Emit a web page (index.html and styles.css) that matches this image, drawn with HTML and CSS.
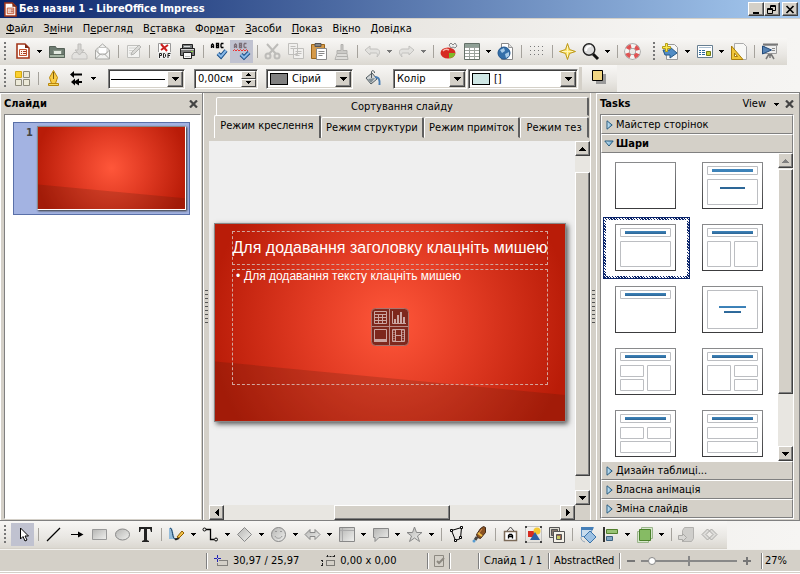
FILE: index.html
```html
<!DOCTYPE html>
<html lang="uk">
<head>
<meta charset="utf-8">
<title>Без назви 1 - LibreOffice Impress</title>
<link rel="stylesheet" href="styles.css">
</head>
<body>
<svg class="defs" aria-hidden="true">
  <defs>
    <linearGradient id="grey" x1="0" y1="0" x2="1" y2="1"><stop offset="0" stop-color="#b5b5b3"/><stop offset="1" stop-color="#f0f0ee"/></linearGradient>
    <linearGradient id="blue" x1="0" y1="0" x2="1" y2="0"><stop offset="0" stop-color="#d2ecfa"/><stop offset="1" stop-color="#69a5cd"/></linearGradient>
    <linearGradient id="bar" x1="0" y1="0" x2="0" y2="1"><stop offset="0" stop-color="#3f86bd"/><stop offset="1" stop-color="#2c6595"/></linearGradient>
    <linearGradient id="frame" x1="0" y1="0" x2="0" y2="1"><stop offset="0" stop-color="#898a8c"/><stop offset="1" stop-color="#3c3c3e"/></linearGradient>
    <symbol id="drop" viewBox="0 0 5 3"><path d="M0 0h5v1H0zM1 1h3v1H1zM2 2h1v1H2z"/></symbol>
    <symbol id="arrow-up" viewBox="0 0 7 4"><path d="M3 0h1v1h1v1h1v1h1v1H0V3h1V2h1V1h1z"/></symbol>
    <symbol id="arrow-down" viewBox="0 0 7 4"><path d="M0 0h7v1H6v1H5v1H4v1H3V3H2V2H1V1H0z"/></symbol>
    <symbol id="arrow-left" viewBox="0 0 4 7"><path d="M4 0v7H3V6H2V5H1V4H0V3h1V2h1V1h1V0z"/></symbol>
    <symbol id="arrow-right" viewBox="0 0 4 7"><path d="M0 0h1v1h1v1h1v1h1v1H3v1H2v1H1v1H0z"/></symbol>
    <symbol id="cross" viewBox="0 0 9 8"><path d="M1 0.5L8 7.5M8 0.5L1 7.5" stroke="#444" stroke-width="2.2"/></symbol>
    <symbol id="doc" viewBox="0 0 14 16"><path d="M1 1h8l4 4v10H1z" fill="#fff" stroke="#a3361a" stroke-width="1.6"/><path d="M9 1v4h4z" fill="#7a2913"/><path d="M3.500 6.500h7v6h-7z" fill="#fff1e8" stroke="#c4532d"/><path d="M5 8.500h1M7 8.500h3M5 10.500h1M7 10.500h3" stroke="#a3361a"/></symbol>
    <symbol id="tri-right" viewBox="0 0 7 10"><path d="M1 .8L6.200 5 1 9.200z" fill="url(#blue)" stroke="#285d80"/></symbol>
    <symbol id="tri-down" viewBox="0 0 10 7"><path d="M.8 1h8.400L5 6z" fill="url(#blue)" stroke="#285d80"/></symbol>
  </defs>
</svg>

<header class="titlebar">
  <svg class="app-icon" width="13" height="15"><use href="#doc"/></svg>
  <h1>Без назви 1 - LibreOffice Impress</h1>
  <div class="window-buttons">
    <button aria-label="Згорнути"><svg width="10" height="9"><path d="M2 7h6v2H2z"/></svg></button>
    <button aria-label="Відновити"><svg width="10" height="9" fill="none" stroke="#000"><path d="M3.500 3V.5h5v5H6M3 1.500h6M.5 3.500h5v5h-5zM0 4.500h6"/></svg></button>
    <button class="close" aria-label="Закрити"><svg width="10" height="9"><path d="M1.500 1l7 7M8.500 1l-7 7" stroke="#000" stroke-width="1.700"/></svg></button>
  </div>
</header>

<nav class="menubar">
  <a href="#"><u>Ф</u>айл</a><a href="#">З<u>м</u>іни</a><a href="#">П<u>е</u>регляд</a><a href="#">В<u>с</u>тавка</a><a href="#">Фор<u>м</u>ат</a><a href="#"><u>З</u>асоби</a><a href="#"><u>П</u>оказ</a><a href="#">Ві<u>к</u>но</a><a href="#"><u>Д</u>овідка</a>
</nav>

<div class="toolrow">
<div class="toolbar" role="toolbar" aria-label="Стандартна">
  <i class="grip"></i>
  <button class="tool" aria-label="Створити"><svg viewBox="0 0 19 19"><use href="#doc" x="3" y="1" width="14" height="16"/></svg></button>
  <button class="more" aria-label="Інші"><svg><use href="#drop"/></svg></button>
  <button class="tool" aria-label="Відкрити"><svg viewBox="0 0 19 19"><path d="M2.500 4.500h6l1 2h8v9h-15z" fill="#6d7b70" stroke="#566158"/><path d="M6.500 8.500h8v7h-8z" fill="#e4ebe2" stroke="#849184"/><path d="M2.500 12.500h15v3h-15z" fill="#a3b3a2" stroke="#5a675b"/></svg></button>
  <button class="tool" aria-label="Зберегти"><svg viewBox="0 0 19 19"><path d="M4 10.500h11l2 3v3.500H2v-3.500z" fill="#e3e2df" stroke="#c2c1be"/><path d="M8 2h3v6h3l-4.500 5L5 8h3z" fill="#d6d5d2" stroke="#bebdba"/></svg></button>
  <button class="tool" aria-label="Надіслати"><svg viewBox="0 0 19 19"><path d="M2.500 8l7-6 7 6v9h-14z" fill="#f2f2f0" stroke="#a8a8a5"/><path d="M5 5.500h9V11l-4.500 2L5 11z" fill="#fff" stroke="#c5c5c2"/><path d="M2.500 17l5-5h4l5 5M2.500 8l5 5M16.500 8l-5 5" fill="none" stroke="#a8a8a5"/></svg></button>
  <i class="sep"></i>
  <button class="tool" aria-label="Редагувати"><svg viewBox="0 0 19 19"><path d="M3.500 3.500h12v12h-12z" fill="#f3f3f1" stroke="#c0c0bd"/><path d="M5 6h8M5 8.500h6M5 11h4" stroke="#d2d2cf"/><path d="M7 13l1-3 7-7 2 2-7 7z" fill="#dadad7" stroke="#b5b5b2"/></svg></button>
  <i class="sep"></i>
  <button class="tool" aria-label="Експорт PDF"><svg viewBox="0 0 19 19"><path d="M3.500 1.500h12v15h-12z" fill="#fff" stroke="#999"/><path d="M6 2l6 7M13 3l-7 5" stroke="#cb2020" stroke-width="2"/><path d="M3 10h13v7H3z" fill="#eee"/><path d="M4.500 16v-4.500h2v2h-2M8.500 15.500v-4h1l1 1v2l-1 1zM13 16v-4.500h2.500M13 13.500h2" fill="none" stroke="#222"/></svg></button>
  <button class="tool" aria-label="Друк"><svg viewBox="0 0 19 19"><path d="M2.500 6.500h14v7h-14z" fill="#777" stroke="#222"/><path d="M4.500 2.500h10v4h-10z" fill="#777c7c" stroke="#222"/><path d="M6 4.500h6" stroke="#ddd"/><path d="M3 7.500h13" stroke="#d5d5d5"/><path d="M13 9.500h2" stroke="#8de03d"/><path d="M5.500 10.500h8v6h-8z" fill="#f7f7f7" stroke="#222"/><path d="M7 14.500h5" stroke="#bbb"/></svg></button>
  <i class="sep"></i>
  <button class="tool" aria-label="Перевірка правопису"><svg viewBox="0 0 19 19"><path d="M2.500 6V3l1-1 1 1v3M3 4.500h2M7.500 1v4.500h2V3.500h-2V1.500h2v2M14.500 1.500h-2l-.5 1v2l.5 1h2" fill="none" stroke="#000" stroke-width="1.300"/><path d="M9 11.500l3 3 5-6" fill="none" stroke="#174d86" stroke-width="4"/><path d="M9 11.500l3 3 5-6" fill="none" stroke="#88b8e8" stroke-width="2"/></svg></button>
  <button class="tool on" aria-label="Автоперевірка правопису"><svg viewBox="0 0 19 19"><path d="M2.500 6V3l1-1 1 1v3M3 4.500h2M7.500 1v4.500h2V3.500h-2V1.500h2v2M14.500 1.500h-2l-.5 1v2l.5 1h2" fill="none" stroke="#7a6d76" stroke-width="1.300"/><path d="M1 9l1.500-1.500L4 9l1.500-1.500L7 9l1.500-1.500L10 9l1.500-1.500L13 9l1.500-1.500L16 9" fill="none" stroke="#e33"/><path d="M9 12.500l3 3 5-5" fill="none" stroke="#174d86" stroke-width="4"/><path d="M9 12.500l3 3 5-5" fill="none" stroke="#88b8e8" stroke-width="2"/></svg></button>
  <i class="sep"></i>
  <button class="tool" aria-label="Вирізати"><svg viewBox="0 0 19 19" fill="none" stroke="#bdbcb9" stroke-width="2"><path d="M4 2l9 10M15 2L6 12"/><circle cx="5" cy="14" r="2.500"/><circle cx="14" cy="14" r="2.500"/></svg></button>
  <button class="tool" aria-label="Копіювати"><svg viewBox="0 0 19 19" fill="#f1f0ee" stroke="#c0bfbc"><path d="M2.500 1.500h9v11h-9zM7.500 6.500h10v10h-10z"/><path d="M4.500 4.500h5M4.500 6.500h3M9.500 9.500h6M9.500 11.500h6M9.500 13.500h4"/></svg></button>
  <button class="tool" aria-label="Вставити"><svg viewBox="0 0 19 19"><path d="M2.500 2.500h13v14h-13z" fill="#d59a4a" stroke="#9b6519"/><path d="M6 1.500h6v3H6z" fill="#888" stroke="#555"/><path d="M7.500 6.500h10v11h-10z" fill="#fff" stroke="#888"/><path d="M9.500 9.500h6M9.500 11.500h6M9.500 13.500h4" stroke="#888"/></svg></button>
  <button class="tool" aria-label="Пензель формату"><svg viewBox="0 0 19 19" fill="#cbcac7" stroke="#b2b1ae"><path d="M9 2.500h2v6h4v3H5v-3h4z"/><path d="M5 11.500h10l1 6H3z" fill="#dddcd9"/><path d="M5 14.500h10"/></svg></button>
  <i class="sep"></i>
  <button class="tool" aria-label="Скасувати"><svg viewBox="0 0 19 19"><path d="M2 8l5-4v3h6c4 0 5 4 1 8 1-4 0-4-2-4H7v2z" fill="#e2e1de" stroke="#c2c1be"/></svg></button>
  <button class="more dim" aria-label="Інші"><svg><use href="#drop"/></svg></button>
  <button class="tool" aria-label="Повернути"><svg viewBox="0 0 19 19"><path d="M17 8l-5-4v3H6c-4 0-5 4-1 8-1-4 0-4 2-4h5v2z" fill="#e2e1de" stroke="#c2c1be"/></svg></button>
  <button class="more dim" aria-label="Інші"><svg><use href="#drop"/></svg></button>
  <i class="sep"></i>
  <button class="tool" aria-label="Діаграма"><svg viewBox="0 0 19 19"><ellipse cx="9" cy="11" rx="7.500" ry="5.500" fill="#d62b22"/><path d="M10 11h6c0 4-3 5-6 5z" fill="#7db928"/><path d="M4 9c2-2 4-2 6-1" stroke="#f9b5ac" stroke-width="1.500" fill="none"/><path d="M10 3l2-2 2 2 2-2 2 3-2 2-2-1-2 1z" fill="#eee" stroke="#888"/></svg></button>
  <button class="tool" aria-label="Таблиця"><svg viewBox="0 0 19 19"><path d="M2.500 1.500h15v16h-15z" fill="#fff" stroke="#647068"/><path d="M3 2h14v3H3z" fill="#8fa096"/><path d="M3 5.500h14M3 8.500h14M3 11.500h14M3 14.500h14M7.500 5v12M12.500 5v12" stroke="#9ba39d"/></svg></button>
  <button class="more" aria-label="Інші"><svg><use href="#drop"/></svg></button>
  <button class="tool" aria-label="Гіперпосилання"><svg viewBox="0 0 19 19"><path d="M5.500 1.500h7l4 4v12h-11z" fill="#fff" stroke="#888"/><path d="M12.500 1.500v4h4" fill="#ddd" stroke="#999"/><circle cx="8" cy="11" r="6" fill="#346fa9" stroke="#20558d"/><path d="M4 8l4-2 1 3-3 2zM9 12l4-2v4l-3 2z" fill="#a8cbe8"/></svg></button>
  <i class="sep"></i>
  <button class="tool" aria-label="Сітка"><svg viewBox="0 0 19 19" stroke="#777" stroke-dasharray="1 3"><path d="M3 4.500h14M3 8.500h14M3 12.500h14"/></svg></button>
  <i class="sep"></i>
  <button class="tool" aria-label="Навігатор"><svg viewBox="0 0 19 19"><path d="M9.500 1.500l2 6 6 2-6 2-2 6-2-6-6-2 6-2z" fill="#fbe36a" stroke="#bd981a"/><path d="M9.500 4v11M4 9.500h11" stroke="#fff5b8"/></svg></button>
  <button class="tool" aria-label="Масштаб"><svg viewBox="0 0 19 19"><path d="M12 12l5 5" stroke="#111" stroke-width="3"/><circle cx="8" cy="7.500" r="5.800" fill="#ddd" stroke="#222" stroke-width="1.400"/><path d="M5 9c0-4 2-5 5-5" fill="none" stroke="#fff" stroke-width="2"/></svg></button>
  <button class="more" aria-label="Інші"><svg><use href="#drop"/></svg></button>
  <i class="sep"></i>
  <button class="tool" aria-label="Довідка"><svg viewBox="0 0 19 19" fill="none"><circle cx="9.500" cy="9.500" r="5.500" stroke="#999" stroke-width="5.500"/><circle cx="9.500" cy="9.500" r="5.500" stroke="#f5f5f3" stroke-width="4"/><circle cx="9.500" cy="9.500" r="5.500" stroke="#e05353" stroke-width="4" stroke-dasharray="4.320 4.320" stroke-dashoffset="-2.160"/></svg></button>
  <i class="grip second"></i>
  <button class="tool" aria-label="Слайд"><svg viewBox="0 0 19 19"><path d="M5.500 2.500h8l3 3v12h-11z" fill="#f7f7f7" stroke="#999"/><path d="M2 8h7V5l7 6-7 5v-3H4z" fill="#518cc5" stroke="#255987"/><path d="M4.500 1.500h2v3h3v2h-3v3h-2v-3h-3v-2h3z" fill="#fce94f" stroke="#b79f16"/></svg></button>
  <button class="more" aria-label="Інші"><svg><use href="#drop"/></svg></button>
  <button class="tool" aria-label="Макет слайда"><svg viewBox="0 0 19 19"><path d="M2.500 3.500h15v12h-15z" fill="#fff" stroke="#667e91"/><path d="M4 5.500h12" stroke="#a9bed0"/><path d="M4 8.500h2M7 8.500h3M4 10.500h2M7 10.500h3M4 12.500h2M7 12.500h3" stroke="#2d6a9b"/><path d="M11.500 9.500h4v4h-4z" fill="#c6cf35" stroke="#737b13"/></svg></button>
  <button class="more" aria-label="Інші"><svg><use href="#drop"/></svg></button>
  <button class="tool" aria-label="Дизайн слайда"><svg viewBox="0 0 19 19"><path d="M5.500 1.500h9l3 3v13h-12z" fill="#f8f8f6" stroke="#aaa"/><path d="M2.500 4v13.500H14z" fill="#f0c638" stroke="#a77e0d"/><path d="M5.500 11v3.500h3z" fill="#fff" stroke="#a77e0d"/></svg></button>
  <i class="sep"></i>
  <button class="tool" aria-label="Показ слайдів"><svg viewBox="0 0 19 19"><path d="M3 2.500h15" stroke="#777" stroke-width="2"/><path d="M4.500 3.500h12v8h-12z" fill="#eee" stroke="#999"/><path d="M9 12l-3 5M11 12l3 5M10 12v4" stroke="#777" stroke-width="1.500"/><path d="M2.500 4v8l9-4z" fill="#5682b2" stroke="#224b7b"/><path d="M12 6.500h3M12 8.500h3" stroke="#888"/></svg></button>
  <i class="pad"></i>
</div>
</div>

<div class="toolrow">
<div class="toolbar" role="toolbar" aria-label="Лінія та заливка">
  <i class="grip"></i>
  <button class="tool" aria-label="Стилі"><svg viewBox="0 0 19 19"><path d="M2.500 2.500h6v6h-6z" fill="#fbd030" stroke="#d5a90f"/><path d="M10.500 2.500h6v6h-6zM2.500 10.500h6v6h-6zM10.500 10.500h6v6h-6z" fill="#ece9d8" stroke="#8e8b7c"/></svg></button>
  <i class="sep"></i>
  <button class="tool" aria-label="Лінія"><svg viewBox="0 0 19 19"><path d="M9.500 1.500l4 7-2 6h-4l-2-6z" fill="#f9cc45" stroke="#ba870a"/><path d="M9.500 3v7" stroke="#7a5c10"/><path d="M4.500 14.500h10v2h-10z" fill="#f4d65e" stroke="#ba870a"/></svg></button>
  <button class="tool" aria-label="Стиль стрілок"><svg viewBox="0 0 19 19"><path d="M3 5.500L7 2v2.500h8v2H7V9zM4 13l4-3.500V12l4-2.500V12h3v2h-3v2.500L8 14v2.500z"/></svg></button>
  <button class="more" aria-label="Інші"><svg><use href="#drop"/></svg></button>
  <label class="combo w-line"><i class="line-swatch"></i><select aria-label="Стиль лінії"><option></option></select><span class="knob"><svg width="7" height="4"><use href="#arrow-down"/></svg></span></label>
  <div class="combo w-size"><input type="text" value="0,00см" aria-label="Ширина лінії"><div class="spin"><button aria-label="Більше"><svg width="5" height="3"><path d="M2 0h1v1h1v1h1v1H0V2h1V1h1z"/></svg></button><button aria-label="Менше"><svg width="5" height="3"><use href="#drop"/></svg></button></div></div>
  <label class="combo w-color"><i class="swatch grey"></i><select aria-label="Колір лінії"><option>Сірий</option></select><span class="knob"><svg width="7" height="4"><use href="#arrow-down"/></svg></span></label>
  <button class="tool wide" aria-label="Область"><svg viewBox="0 0 19 19"><path d="M3 9l6-5 5 6-6 5z" fill="#d3d6d7" stroke="#4f5a60"/><path d="M5 10l7-1-4 5z" fill="#7f8d94"/><path d="M8.500 9V3c0-2 3-2 3 1" fill="none" stroke="#4f5a60"/><path d="M12 8c4 0 5 3 4.500 8" fill="none" stroke="#4a7eb3" stroke-width="2"/></svg></button>
  <label class="combo w-type"><select aria-label="Тип заливки"><option>Колір</option></select><span class="knob"><svg width="7" height="4"><use href="#arrow-down"/></svg></span></label>
  <label class="combo w-fill"><i class="swatch mint"></i><select aria-label="Заливка"><option>[]</option></select><span class="knob"><svg width="7" height="4"><use href="#arrow-down"/></svg></span></label>
  <i class="divider"></i>
  <button class="tool shadow" aria-label="Тінь"><svg viewBox="0 0 19 19"><path d="M6 5h10v10H6z" fill="#999"/><path d="M2.500 1.500h10v10h-10z" fill="#f1d684" stroke="#000"/></svg></button>
</div>
</div>

<main class="work">
  <aside class="panel slides">
    <div class="panel-head"><h2>Слайди</h2><button aria-label="Закрити"><svg width="9" height="8"><use href="#cross"/></svg></button></div>
    <div class="slide-list">
      <div class="slide-item"><span>1</span><div class="mini slide-art"></div></div>
    </div>
  </aside>
  <div class="splitter"><i class="split-grip"></i></div>

  <section class="editor">
    <div class="tabs">
      <button class="tab top">Сортування слайду</button>
      <div class="tab-row"><button class="tab active">Режим креслення</button><button class="tab">Режим структури</button><button class="tab">Режим приміток</button><button class="tab last">Режим тез</button></div>
    </div>
    <div class="canvas">
      <div class="slide slide-art">
        <div class="ph title-ph">Для додавання заголовку клацніть мишею</div>
        <div class="ph body-ph">
          <ul><li>Для додавання тексту клацніть мишею</li></ul>
          <svg class="insert" width="38" height="38" viewBox="0 0 38 38" fill="none" stroke="#b98b87"><rect x=".5" y=".5" width="37" height="37" rx="4" fill="#7e281d" stroke="#a6746d"/><path d="M18.500 1v36M1 18.500h36"/><path d="M3.500 3.500h12v12h-12zM4 6.500h12M4 9.500h12M4 12.500h12M7.500 7v9M11.500 7v9" stroke="#cba5a1"/><path d="M21.500 3v12.500H35" stroke="#cba5a1"/><path d="M24 15v-4M27 15V7M30 15V4M33 15V9" stroke="#cba5a1" stroke-width="2"/><path d="M3.500 21.500h12v12h-12zM4 32h12" stroke="#cba5a1"/><path d="M3 31h13v3H3z" fill="#cba5a1" stroke="none"/><path d="M21.500 21.500h12v12h-12zM24.500 22v12M30.500 22v12M25 27.500h6" stroke="#cba5a1"/><path d="M23 22v12M32 22v12" stroke="#cba5a1" stroke-dasharray="1 1"/></svg>
        </div>
      </div>
    </div>
    <div class="scroll vertical">
      <button aria-label="Вгору"><svg width="7" height="4"><use href="#arrow-up"/></svg></button><i class="thumb"></i><button aria-label="Вниз"><svg width="7" height="4"><use href="#arrow-down"/></svg></button>
    </div>
    <div class="scroll horizontal">
      <button aria-label="Ліворуч"><svg width="4" height="7"><use href="#arrow-left"/></svg></button><i class="thumb"></i><button aria-label="Праворуч"><svg width="4" height="7"><use href="#arrow-right"/></svg></button>
    </div>
  </section>
  <div class="splitter"><i class="split-grip"></i></div>

  <aside class="panel tasks">
    <div class="panel-head"><h2>Tasks</h2><button class="view">View<svg width="5" height="3"><use href="#drop"/></svg></button><button aria-label="Закрити"><svg width="9" height="8"><use href="#cross"/></svg></button></div>
    <div class="accordion">
      <button class="fold"><svg width="7" height="10"><use href="#tri-right"/></svg>Майстер сторінок</button>
      <button class="fold open"><svg width="10" height="7"><use href="#tri-down"/></svg>Шари</button>
      <div class="layouts">
        <div class="layout-grid">
          <button aria-label="Порожній слайд"><svg viewBox="0 0 61 47"><rect x=".5" y=".5" width="60" height="46" class="frame"/></svg></button>
          <button aria-label="Титульний слайд"><svg viewBox="0 0 61 47"><rect x=".5" y=".5" width="60" height="46" class="frame"/><path d="M5.500 4.500h50v8h-50zM5.500 17.500h50v25h-50z" class="box"/><path d="M10 7h41v3H10zM18 25h25v2H18z" class="fillbar"/></svg></button>
          <button class="selected" aria-label="Заголовок, вміст"><svg viewBox="0 0 61 47"><rect x=".5" y=".5" width="60" height="46" class="frame"/><path d="M5.500 4.500h50v8h-50zM5.500 17.500h50v25h-50z" class="box"/><path d="M10 7h41v3H10z" class="fillbar"/></svg></button>
          <button aria-label="Заголовок і 2 вмісти"><svg viewBox="0 0 61 47"><rect x=".5" y=".5" width="60" height="46" class="frame"/><path d="M5.500 4.500h50v8h-50zM5.500 17.500h23v25h-23zM32.500 17.500h23v25h-23z" class="box"/><path d="M10 7h41v3H10z" class="fillbar"/></svg></button>
          <button aria-label="Лише заголовок"><svg viewBox="0 0 61 47"><rect x=".5" y=".5" width="60" height="46" class="frame"/><path d="M5.500 4.500h50v8h-50z" class="box"/><path d="M10 7h41v3H10z" class="fillbar"/></svg></button>
          <button aria-label="Текст по центру"><svg viewBox="0 0 61 47"><rect x=".5" y=".5" width="60" height="46" class="frame"/><path d="M5.500 4.500h50v38h-50z" class="box"/><path d="M17 20h27v2H17zM22 25h17v2H22z" class="fillbar"/></svg></button>
          <button aria-label="Заголовок, 2 вмісти й вміст"><svg viewBox="0 0 61 47"><rect x=".5" y=".5" width="60" height="46" class="frame"/><path d="M5.500 4.500h50v8h-50zM5.500 17.500h23v11h-23zM5.500 31.500h23v11h-23zM32.500 17.500h23v25h-23z" class="box"/><path d="M10 7h41v3H10z" class="fillbar"/></svg></button>
          <button aria-label="Заголовок, вміст і 2 вмісти"><svg viewBox="0 0 61 47"><rect x=".5" y=".5" width="60" height="46" class="frame"/><path d="M5.500 4.500h50v8h-50zM5.500 17.500h23v25h-23zM32.500 17.500h23v11h-23zM32.500 31.500h23v11h-23z" class="box"/><path d="M10 7h41v3H10z" class="fillbar"/></svg></button>
          <button aria-label="Заголовок, 2 вмісти над вмістом"><svg viewBox="0 0 61 47"><rect x=".5" y=".5" width="60" height="46" class="frame"/><path d="M5.500 4.500h50v8h-50zM5.500 17.500h23v11h-23zM32.500 17.500h23v11h-23zM5.500 31.500h50v11h-50z" class="box"/><path d="M10 7h41v3H10z" class="fillbar"/></svg></button>
          <button aria-label="Заголовок, вміст над вмістом"><svg viewBox="0 0 61 47"><rect x=".5" y=".5" width="60" height="46" class="frame"/><path d="M5.500 4.500h50v8h-50zM5.500 17.500h50v11h-50zM5.500 31.500h50v11h-50z" class="box"/><path d="M10 7h41v3H10z" class="fillbar"/></svg></button>
        </div>
        <div class="scroll vertical">
          <button class="off" aria-label="Вгору"><svg width="7" height="4"><use href="#arrow-up"/></svg></button><i class="thumb"></i><button aria-label="Вниз"><svg width="7" height="4"><use href="#arrow-down"/></svg></button>
        </div>
      </div>
      <button class="fold"><svg width="7" height="10"><use href="#tri-right"/></svg>Дизайн таблиці...</button>
      <button class="fold"><svg width="7" height="10"><use href="#tri-right"/></svg>Власна анімація</button>
      <button class="fold"><svg width="7" height="10"><use href="#tri-right"/></svg>Зміна слайдів</button>
    </div>
  </aside>
</main>

<div class="toolrow drawing">
<div class="toolbar" role="toolbar" aria-label="Малювання">
  <i class="grip"></i>
  <button class="tool on" aria-label="Вибрати"><svg viewBox="0 0 19 19"><path d="M7.500 3v11l2.500-2.500 2 4.500 2-1-2-4h3.500z" fill="#fff" stroke="#000"/></svg></button>
  <i class="sep"></i>
  <button class="tool" aria-label="Лінія"><svg viewBox="0 0 19 19"><path d="M3 16L16 3" stroke="#000" stroke-width="1.200"/></svg></button>
  <button class="tool" aria-label="Стрілка"><svg viewBox="0 0 19 19"><path d="M4 9.500h9" stroke="#000"/><path d="M11 6.500l5.500 3-5.500 3z"/></svg></button>
  <button class="tool" aria-label="Прямокутник"><svg viewBox="0 0 19 19"><path d="M2.500 4.500h14v10h-14z" fill="url(#grey)" stroke="#999"/></svg></button>
  <button class="tool" aria-label="Еліпс"><svg viewBox="0 0 19 19"><ellipse cx="9.500" cy="9.500" rx="7" ry="5.500" fill="url(#grey)" stroke="#888"/></svg></button>
  <button class="tool" aria-label="Текст"><svg viewBox="0 0 19 19"><path d="M3 2h13v5h-1l-1-3h-3v11l2 1v1H6v-1l2-1V4H5L4 7H3z" fill="#222"/></svg></button>
  <i class="sep"></i>
  <button class="tool" aria-label="Крива"><svg viewBox="0 0 19 19"><path d="M2 3h3l3 11H2z" fill="#93bbda"/><path d="M3 3c3 0 2 11 5 11" fill="none" stroke="#173b5b"/><path d="M8 14c4 1 4-2 5-4" stroke="#222" fill="none" stroke-width="2"/><path d="M10 12l5-6 2 2-5 5z" fill="#f4c34a" stroke="#8e5c00"/></svg></button>
  <button class="more" aria-label="Інші"><svg><use href="#drop"/></svg></button>
  <button class="tool" aria-label="З'єднувач"><svg viewBox="0 0 19 19" fill="none" stroke="#000"><path d="M5 4.500h4.500v10H13" stroke-width="1.300"/><circle cx="3.500" cy="4.500" r="1.500"/><circle cx="15" cy="14.500" r="1.500"/></svg></button>
  <button class="more" aria-label="Інші"><svg><use href="#drop"/></svg></button>
  <button class="tool" aria-label="Основні фігури"><svg viewBox="0 0 19 19"><path d="M9.500 2.500l7 7-7 7-7-7z" fill="url(#grey)" stroke="#888"/></svg></button>
  <button class="more" aria-label="Інші"><svg><use href="#drop"/></svg></button>
  <button class="tool" aria-label="Символи"><svg viewBox="0 0 19 19"><circle cx="9.500" cy="9.500" r="7" fill="url(#grey)" stroke="#888"/><path d="M6 6.500h2M11 6.500h2M6 11c1 3 6 3 7 0" fill="none" stroke="#999"/></svg></button>
  <button class="more" aria-label="Інші"><svg><use href="#drop"/></svg></button>
  <button class="tool" aria-label="Блокові стрілки"><svg viewBox="0 0 19 19"><path d="M2 9.500l5-5v3h5v-3l5 5-5 5v-3H7v3z" fill="url(#grey)" stroke="#888"/></svg></button>
  <button class="more" aria-label="Інші"><svg><use href="#drop"/></svg></button>
  <button class="tool" aria-label="Блок-схеми"><svg viewBox="0 0 19 19"><path d="M2.500 2.500h15v14h-15z" fill="url(#grey)" stroke="#888"/><path d="M3 5.500h14M5.500 3v13" stroke="#aaa"/></svg></button>
  <button class="more" aria-label="Інші"><svg><use href="#drop"/></svg></button>
  <button class="tool" aria-label="Виноски"><svg viewBox="0 0 19 19"><path d="M2.500 3.500h15v9H8l-4 4v-4H2.500z" fill="url(#grey)" stroke="#888"/></svg></button>
  <button class="more" aria-label="Інші"><svg><use href="#drop"/></svg></button>
  <button class="tool" aria-label="Зірки"><svg viewBox="0 0 19 19"><path d="M9.500 2l2 5.500H17l-4.500 3.500 2 5.500-5-3.500-5 3.500 2-5.500L2 7.500h5.500z" fill="url(#grey)" stroke="#888"/></svg></button>
  <button class="more" aria-label="Інші"><svg><use href="#drop"/></svg></button>
  <i class="sep"></i>
  <button class="tool" aria-label="Вузли"><svg viewBox="0 0 19 19" fill="#fff" stroke="#000"><path d="M4.500 5.500l10-3-1 11-5 2z" fill="none"/><path d="M3.500 4.500h2v2h-2zM13.500 1.500h2v2h-2zM12.500 11.500h2v2h-2zM7.500 14.500h2v2h-2z"/></svg></button>
  <button class="tool" aria-label="Точки приклеювання"><svg viewBox="0 0 19 19"><path d="M13.500 1.500l2 1v5l-5 6-3-1-1-3 4-6z" fill="#8a5222" stroke="#402817"/><path d="M8 8l4 3" stroke="#edbd45" stroke-width="2"/><path d="M12 4l-3 4" stroke="#d89355"/><path d="M7 12l-2 3" stroke="#444" stroke-width="3"/><circle cx="4" cy="16" r="1.500" fill="#569bd0"/></svg></button>
  <i class="sep"></i>
  <button class="tool" aria-label="Галерея Fontwork"><svg viewBox="0 0 19 19"><path d="M6 6l3.500-4L13 6" fill="none" stroke="#444"/><path d="M3.500 6.500h12v9h-12z" fill="#fff" stroke="#7b6a58" stroke-width="1.500"/><path d="M7.500 13.500v-3l1-1h2l1 1v3M8 11.500h3" fill="none" stroke="#000" stroke-width="1.300"/></svg></button>
  <button class="tool" aria-label="З файла"><svg viewBox="0 0 19 19"><path d="M1.500 1.500h16v16h-16z" fill="none" stroke="#999" stroke-dasharray="1 1"/><path d="M1 1h2v2H1zM16 1h2v2h-2zM1 16h2v2H1zM16 16h2v2h-2z" fill="#444"/><path d="M4 6h6v6H4z" fill="#d52b20"/><circle cx="13" cy="6" r="3.500" fill="#f5c931"/><path d="M11 7l5 8H6z" fill="#2d61a5"/></svg></button>
  <button class="tool" aria-label="Галерея"><svg viewBox="0 0 19 19" stroke="#555"><path d="M2.500 2.500h10v10h-10z" fill="#dedbd2"/><path d="M4.500 4.500h6v6h-6z" fill="#85776b"/><path d="M6.500 6.500h11v11h-11z" fill="#f4f1e8"/><path d="M9.500 9.500h5v5h-5z" fill="#9a654b"/><path d="M10 11h3v3h-3z" fill="#c6ca62" stroke="none"/></svg></button>
  <i class="sep"></i>
  <button class="tool" aria-label="Обертати"><svg viewBox="0 0 19 19"><path d="M3.500 2.500h12l-5 9h-7z" fill="#c8dced" stroke="#5d8fc1"/><path d="M3 2h12v3H3z" fill="#457fb8"/><path d="M12 6l6 6-6 6-6-6z" fill="#9dc1e3" stroke="#3973aa"/><path d="M3 12c0 3 1 4 4 5" fill="none" stroke="#9aaabb"/></svg></button>
  <button class="tool" aria-label="Вирівнювання"><svg viewBox="0 0 19 19"><path d="M3 2v15" stroke="#333" stroke-width="2"/><path d="M5.500 4.500h11v4h-11z" fill="#98c375" stroke="#527f2e"/><path d="M5.500 11.500h6v4h-6z" fill="#83a7c5" stroke="#3d6484"/></svg></button>
  <button class="more" aria-label="Інші"><svg><use href="#drop"/></svg></button>
  <button class="tool" aria-label="Розташувати"><svg viewBox="0 0 19 19"><path d="M2.500 6.500h11v11h-11z" fill="#d7e7cc" stroke="#9bb58c"/><path d="M6.500 2.500h11v11h-11z" fill="#d7e7cc" stroke="#9bb58c"/><path d="M4.500 4.500h11v11h-11z" fill="#86bb64" stroke="#4a812b"/></svg></button>
  <button class="more" aria-label="Інші"><svg><use href="#drop"/></svg></button>
  <i class="sep"></i>
  <button class="tool" aria-label="Видавлювання"><svg viewBox="0 0 19 19"><path d="M5.500 5.500l2-3h9v11l-2 3h-9z" fill="#cfcecb" stroke="#b2b1ae"/><path d="M1.500 10.500h4v-2l4 4-4 4v-2h-4z" fill="#d8d7d4" stroke="#aaa9a6"/></svg></button>
  <button class="tool" aria-label="Взаємодія"><svg viewBox="0 0 19 19"><path d="M7.500 4L2 9.500 7.500 15l2-2-3.500-3.500L9.500 6zM11.500 4L17 9.500 11.500 15l-2-2 3.500-3.500L9.500 6z" fill="#dddcd9" stroke="#aaa9a6"/></svg></button>
  <i class="pad"></i>
</div>
</div>

<footer class="status">
  <div class="cell blank"></div>
  <div class="cell position"><svg width="15" height="12"><path d="M3.500 0v8M0 3.500h8" stroke="#2222b8" stroke-dasharray="3 1"/><path d="M5.500 5.500h8v5h-10v-3" fill="none" stroke="#333" stroke-dasharray="1 1"/></svg><span>30,97 / 25,97</span><svg class="size-icon" width="15" height="12" fill="none" stroke="#222"><path d="M1.500 5v6M0 5.500h3M0 10.500h3M5.500 1.500h9M6.500 0v3M13.500 0v3" stroke-dasharray="2 1"/><path d="M5.500 5.500h8v5h-8z" stroke-dasharray="1 1"/></svg><span>0,00 x 0,00</span></div>
  <div class="cell sign"><svg width="12" height="12" fill="none" stroke="#8d8981"><path d="M1.500.5h9v11h-9z"/><path d="M4 6l2 2 5-5" stroke-width="2"/></svg></div>
  <div class="cell gap"></div>
  <div class="cell page">Слайд 1 / 1</div>
  <div class="cell theme">AbstractRed</div>
  <div class="cell zoom"><button aria-label="Зменшити"><svg width="8" height="8"><path d="M0 3h8v2H0z"/></svg></button><input type="range" min="0" max="100" value="8" aria-label="Масштаб"><button aria-label="Збільшити"><svg width="8" height="8"><path d="M0 3h3V0h2v3h3v2H5v3H3V5H0z"/></svg></button></div>
  <div class="cell percent">27%</div>
</footer>
</body>
</html>
```

FILE: styles.css
```css
* { box-sizing: border-box; }
body {
  margin: 0;
  min-height: 100vh;
  display: flex;
  flex-direction: column;
  background: #d4d0c8;
  color: #000;
  font: 11px/14px "DejaVu Sans Condensed", "DejaVu Sans", sans-serif;
}
h1, h2, ul { margin: 0; padding: 0; font-size: inherit; }
button, select, input { font: inherit; color: inherit; margin: 0; padding: 0; border: 0; background: none; border-radius: 0; }
i { display: block; }
svg { display: block; flex: none; }
.defs { position: absolute; width: 0; height: 0; }

.titlebar {
  display: flex;
  align-items: center;
  height: 19px;
  padding: 0 2px 0 4px;
  gap: 2px;
  color: #fff;
  background: linear-gradient(to right, #0a246a, #a6caf0);
  border-bottom: 1px solid #d4d0c8;
}
.titlebar h1 { flex: 1; }
.window-buttons { display: flex; }
.window-buttons button, .knob, .scroll button, .thumb, .spin button {
  background: #d4d0c8;
  border: 1px solid;
  border-color: #fff #404040 #404040 #fff;
  box-shadow: inset -1px -1px #808080;
  display: flex;
  align-items: center;
  justify-content: center;
}
.window-buttons button { width: 16px; height: 14px; }
.window-buttons .close { margin-left: 2px; }

.menubar {
  display: flex;
  height: 19px;
  align-items: center;
  padding: 1px 0 0 6px;
  gap: 10px;
  background: linear-gradient(to right, #d6d2ca, #f6f5f3 85%);
}
.menubar a { color: inherit; text-decoration: none; white-space: nowrap; }

.toolrow { display: flex; background: linear-gradient(to right, #e2dfd9, #f6f5f3); }
.toolbar {
  display: flex;
  align-items: center;
  height: 27px;
  background: linear-gradient(#f8f7f5, #e9e7e3 60%, #dbd8d1);
}
.drawing .toolbar { height: 28px; border-bottom: 1px solid #d4d0c8; }
.drawing { border-bottom: 1px solid #f3f2ef; }
.tool { width: 23px; height: 23px; padding: 2px; flex: none; }
.tool svg { width: 19px; height: 19px; }
.tool.on { background: #c0c2d0; }
.tool.wide { width: 40px; padding: 2px 10px; }
.tool.shadow { width: 35px; padding: 2px 6px 2px 8px; }
.more { width: 11px; height: 23px; padding: 0 3px; flex: none; }
.more svg { width: 5px; height: 3px; }
.dim { color: #777; fill: #777; }
.sep { width: 8px; height: 13px; flex: none; background: linear-gradient(#a5a29c, #a5a29c) 4px 0 / 1px 100% no-repeat; }
.grip { width: 11px; height: 19px; flex: none; background: repeating-linear-gradient(#777 0 2px, transparent 2px 4px) 4px 0 / 2px 100% no-repeat; }
.grip.second { width: 15px; background-position-x: 9px; }
.pad { width: 6px; }
.divider { width: 3px; height: 23px; background: #d4d0c8; margin-left: 1px; }

.combo {
  display: flex;
  align-items: stretch;
  height: 20px;
  background: #fff;
  border: 1px solid;
  border-color: #808080 #fff #fff #808080;
  box-shadow: inset 1px 1px #404040, inset -1px -1px #d4d0c8;
  padding: 1px;
}
.combo select, .combo input { appearance: none; flex: 1; min-width: 0; width: 0; padding-left: 2px; outline: 0; }
.knob { width: 16px; flex: none; }
.w-line { width: 77px; margin-left: 9px; }
.w-size { width: 64px; margin-left: 9px; }
.w-color { width: 87px; margin-left: 8px; }
.w-type { width: 74px; }
.w-fill { width: 110px; margin-left: 1px; }
.line-swatch { width: 57px; height: 1px; margin: 8px 0 0 1px; background: #000; }
.swatch { width: 18px; height: 12px; margin: 2px; border: 1px solid #000; }
.swatch.grey { background: #808080; }
.swatch.mint { background: #cfe7e5; }
.spin { display: flex; flex-direction: column; width: 15px; }
.spin button { flex: 1; box-shadow: none; }

.work { flex: 1; display: flex; min-height: 0; border-top: 1px solid #808080; border-bottom: 1px solid #808080; }
.panel { display: flex; flex-direction: column; padding: 1px 1px 1px 4px; border-right: 1px solid #808080; box-shadow: inset 1px 1px #fff; flex: none; }
.slides { width: 203px; }
.panel-head { display: flex; align-items: center; height: 20px; }
.panel-head h2 { flex: 1; }
.panel-head button { padding: 0 3px; }
.slide-list { flex: 1; background: #fff; border: 1px solid; border-color: #808080 #fff #fff #808080; padding: 7px 10px 7px 8px; }
.slide-item { display: flex; height: 93px; background: #a3b3e2; border: 1px solid #5a70a8; color: #444; padding: 3px 3px 3px 12px; justify-content: space-between; font-weight: bold; }
.mini { width: 149px; height: 84px; border: 1px solid #888; border-bottom-color: #fff; border-right-color: #fff; box-shadow: 1px 1px 2px #333; }
.slide-art {
  position: relative;
  background: radial-gradient(circle farthest-side at 50% 50%, #ff573a, #e33c24 45%, #b91c08 103%) padding-box;
}
.slide-art::before { content: ""; position: absolute; inset: 0; background: rgba(70, 25, 12, .2); clip-path: polygon(0 70%, 100% 87%, 100% 100%, 0 100%); }

.splitter { width: 6px; flex: none; display: flex; align-items: center; justify-content: center; border-left: 1px solid #fff; }
.split-grip { width: 3px; height: 34px; background: repeating-linear-gradient(#555 0 1px, transparent 1px 4px); }

.editor { flex: 1; min-width: 0; display: grid; grid-template-columns: minmax(0, 1fr) 15px; grid-template-rows: 48px minmax(0, 1fr) 15px; }
.tabs { grid-column: 1 / 3; padding: 4px 1px 0 5px; }
.tab { border: 1px solid; border-color: #fff #606060 transparent #fff; border-right-width: 2px; border-radius: 2px 2px 0 0; height: 21px; background: #d4d0c8; flex: none; white-space: nowrap; }
.tab.top { display: block; width: calc(100% - 2px); margin-left: 2px; height: 19px; }
.tab-row { display: flex; align-items: flex-end; }
.tab-row .tab { flex: 104 1 0; }
.tab-row .tab:nth-child(3) { flex-grow: 96; }
.tab-row .tab.last { flex-grow: 68; }
.tab-row .tab.active { flex-grow: 107; height: 23px; margin-top: -1px; border-bottom: 0; padding-bottom: 2px; }
.canvas { background: #efefef; display: flex; align-items: center; padding: 0 9px 2px 5px; overflow: hidden; }
.slide { width: 100%; aspect-ratio: 352 / 199; border: 1px solid #888; box-shadow: 2px 2px 5px #555; padding: 7px 17px; }
.ph { position: relative; border: 1px dashed #d3a69d; color: #fff; font-family: "Liberation Sans", sans-serif; white-space: nowrap; }
.title-ph { height: 34px; font-size: 16px; line-height: 32px; display: flex; justify-content: center; }
.body-ph { height: 116px; margin-top: 4px; font-size: 12px; line-height: 13px; }
.body-ph ul { list-style: none; padding-left: 3px; }
.body-ph li::before { content: "•"; display: inline-block; width: 8px; }
.insert { position: absolute; left: 50%; top: 50%; transform: translate(-50%, -50%); }

.scroll { background: #e8e6e1; display: flex; }
.scroll.vertical { flex-direction: column; }
.scroll button { width: 15px; height: 15px; flex: none; }
.scroll.horizontal { grid-column: 1; }
.scroll .off { fill: #808080; }
.editor .vertical .thumb { margin: 16px 0 auto; flex: 0 1 304px; }
.editor .horizontal .thumb { margin: 0 auto 0 110px; flex: 0 1 116px; }

.tasks { width: 204px; padding-right: 5px; }
.tasks .panel-head > button:last-child { padding-right: 0; }
.panel-head .view { display: flex; align-items: center; gap: 8px; }
.accordion { flex: 1; display: flex; flex-direction: column; border: 1px solid; border-color: #808080 #fff #fff #808080; }
.fold { display: flex; align-items: center; gap: 3px; height: 19px; flex: none; padding-left: 4px; border: 1px solid; border-color: #fff #808080 #808080 #fff; text-align: left; }
.fold.open { font-weight: bold; padding-left: 2px; gap: 2px; }
.layouts { flex: 1 1 0; min-height: 0; display: flex; background: #fff; overflow: hidden; }
.layout-grid { flex: 1; display: grid; grid-template-columns: 87px 87px; grid-auto-rows: 62px; padding: 2px 0 0 2px; }
.layout-grid button { width: 87px; height: 62px; padding: 7px 12px 8px; background: #fff; }
.layout-grid svg { width: 61px; height: 47px; }
.layout-grid .selected { border: 3px dotted #0a246a; outline: 1px solid #0a246a; outline-offset: -1px; padding: 4px 9px 5px; }
.frame { fill: #fff; stroke: url(#frame); }
.box { fill: none; stroke: #bcbec2; }
.fillbar { fill: url(#bar); }
.layouts .scroll { width: 15px; flex: none; }
.layouts .thumb { flex: 0 1 225px; margin: 1px 0 auto; }
.layouts .selected { border-style: double; border-image: repeating-conic-gradient(#0a246a 0 25%, #fff 0 50%) 3 / 3px; border-image: repeating-linear-gradient(45deg, #0a246a 0 1px, #fff 1px 2px) 3; }

.status { display: flex; height: 24px; align-items: center; border-bottom: 3px double #fff; white-space: nowrap; }
.cell { height: 16px; display: flex; align-items: center; border-right: 1px solid #fff; box-shadow: inset -1px 0 #808080; flex: none; }
.blank { width: 208px; }
.position { width: 221px; padding-left: 6px; gap: 4px; }
.size-icon { margin-left: 18px; }
.sign { width: 22px; padding-left: 4px; }
.gap { width: 29px; }
.page { width: 70px; padding-left: 4px; }
.theme { width: 71px; padding-left: 4px; }
.cell.zoom { flex: 1; min-width: 0; padding: 0 11px 0 6px; gap: 6px; fill: #777; }
.zoom input { appearance: none; flex: 1; width: 0; min-width: 0; height: 12px; background: linear-gradient(#888, #888) 50% 50% / 2px 10px no-repeat, linear-gradient(#888, #888) 0 50% / 100% 2px no-repeat; }
.zoom input::-webkit-slider-thumb { appearance: none; width: 8px; height: 8px; border-radius: 50%; background: #fff; border: 1px solid #888; }
.percent { width: 37px; padding-left: 2px; border: 0; box-shadow: none; }
```
